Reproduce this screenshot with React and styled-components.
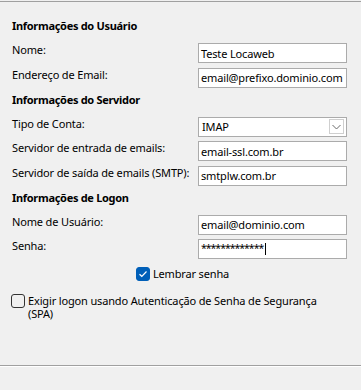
import React from 'react'
import styled, { createGlobalStyle } from 'styled-components'

const GlobalStyle = createGlobalStyle`
  html, body {
    margin: 0;
    padding: 0;
    background: #f0f0f0;
  }
  body {
    font-family: "Noto Sans", "Segoe UI", sans-serif;
    font-size: 11px;
    letter-spacing: -0.15px;
    color: #000;
  }
`

const Window = styled.div`
  width: 361px;
  height: 390px;
  display: flex;
  flex-direction: column;
  background: #f0f0f0;
  overflow: hidden;
`

const TopRule = styled.div`
  margin-top: 1px;
  height: 1px;
  background: #a0a0a0;
`

const Form = styled.div`
  flex: 1;
  padding: 16px 0 0 12px;
  display: flex;
  flex-direction: column;
`

const Heading = styled.div`
  font-size: 11px;
  font-weight: 700;
  letter-spacing: -0.3px;
  line-height: 16px;
  height: 16px;
  margin-bottom: 9px;
`

const Row = styled.div`
  display: grid;
  grid-template-columns: 186px 149px;
  height: 20px;
  margin-bottom: ${p => (p.$last ? '4px' : '4.5px')};
`

const Label = styled.div`
  line-height: 14px;
  white-space: nowrap;
`

const Field = styled.div`
  box-sizing: border-box;
  height: 20px;
  border: 1px solid #ababab;
  background: #fff;
  display: flex;
  align-items: center;
  padding-left: 2px;
  white-space: nowrap;
  overflow: hidden;
`

const SelectBox = styled(Field)`
  justify-content: space-between;
  padding-right: 2px;
  padding-left: 3px;
`

const DropButton = styled.div`
  box-sizing: border-box;
  width: 15px;
  height: 15px;
  border: 1px solid #cfcfcf;
  display: flex;
  align-items: center;
  justify-content: center;
`

const Masked = styled.span`
  letter-spacing: -1px;
  font-size: 10.5px;
  margin-top: -2px;
`

const Caret = styled.span`
  display: inline-block;
  width: 1px;
  height: 12px;
  background: #000;
  margin-left: 2px;
`

const CheckRow = styled.label`
  display: flex;
  align-items: flex-start;
  gap: 3px;
  justify-content: ${p => (p.$center ? 'center' : 'flex-start')};
  line-height: 13px;
  margin: ${p => p.$margin};
  padding-right: ${p => (p.$center ? '8px' : '20px')};
  margin-left: ${p => (p.$center ? '0' : '-1px')};
`

const Box = styled.span`
  flex: none;
  box-sizing: border-box;
  width: 14px;
  height: 14px;
  border-radius: 3px;
  border: 1px solid ${p => (p.$checked ? '#005fb8' : '#333')};
  background: ${p => (p.$checked ? '#005fb8' : 'transparent')};
  display: flex;
  align-items: center;
  justify-content: center;
`

const Footer = styled.div`
  height: 24px;
  border-top: 1px solid #a0a0a0;
  box-shadow: inset 0 1px 0 #fff;
`

function Chevron() {
  return (
    <svg width="9" height="6" viewBox="0 0 9 6">
      <path d="M0.5 1 L4.5 5 L8.5 1" fill="none" stroke="#6a6a6a" strokeWidth="1" />
    </svg>
  )
}

function Check() {
  return (
    <svg width="10" height="8" viewBox="0 0 10 8">
      <path d="M1.5 4.2 L3.8 6.3 L8.5 1.5" fill="none" stroke="#fff" strokeWidth="1.2" />
    </svg>
  )
}

function FieldRow({ label, value, last, children }) {
  return (
    <Row $last={last}>
      <Label>{label}</Label>
      {children || <Field>{value}</Field>}
    </Row>
  )
}

function Checkbox({ checked, center, margin, children }) {
  return (
    <CheckRow $center={center} $margin={margin}>
      <Box $checked={checked}>{checked && <Check />}</Box>
      <span>{children}</span>
    </CheckRow>
  )
}

export default function App() {
  return (
    <>
      <GlobalStyle />
      <Window>
        <TopRule />
        <Form>
          <Heading>Informações do Usuário</Heading>
          <FieldRow label="Nome:" value="Teste Locaweb" />
          <FieldRow label="Endereço de Email:" value="email@prefixo.dominio.com" last />

          <Heading>Informações do Servidor</Heading>
          <FieldRow label="Tipo de Conta:">
            <SelectBox>
              <span>IMAP</span>
              <DropButton><Chevron /></DropButton>
            </SelectBox>
          </FieldRow>
          <FieldRow label="Servidor de entrada de emails:" value="email-ssl.com.br" />
          <FieldRow label="Servidor de saída de emails (SMTP):" value="smtplw.com.br" last />

          <Heading>Informações de Logon</Heading>
          <FieldRow label="Nome de Usuário:" value="email@dominio.com" />
          <FieldRow label="Senha:">
            <Field>
              <Masked>*************</Masked>
              <Caret />
            </Field>
          </FieldRow>

          <Checkbox checked center margin="3px 0 0 0">Lembrar senha</Checkbox>
          <Checkbox margin="13px 0 0 0">
            Exigir logon usando Autenticação de Senha de Segurança (SPA)
          </Checkbox>
        </Form>
        <Footer />
      </Window>
    </>
  )
}
